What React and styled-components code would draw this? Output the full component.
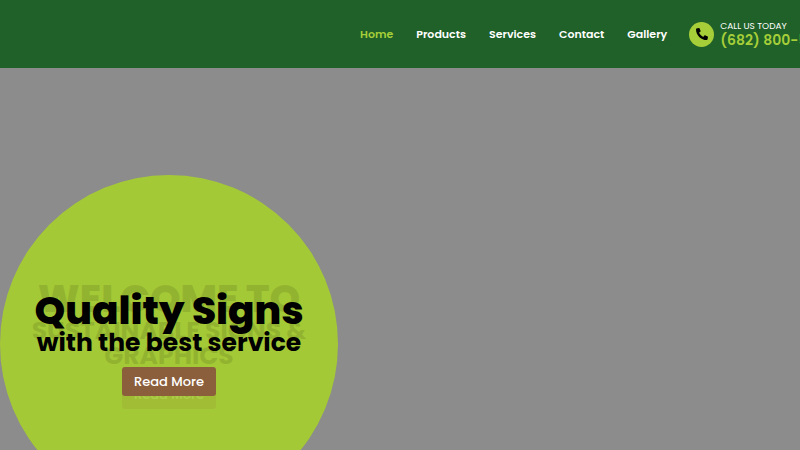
import React from "react";
import styled, { createGlobalStyle } from "styled-components";
import { FaPhoneAlt } from "react-icons/fa";

const GlobalStyle = createGlobalStyle`
  * {
    box-sizing: border-box;
  }

  body {
    margin: 0;
    font-family: Poppins, Inter, sans-serif;
    background-color: #8c8c8c;
    overflow: hidden;
  }
`;

const Page = styled.div`
  height: 100vh;
  display: flex;
  flex-direction: column;
  overflow: hidden;
`;

const Header = styled.header`
  display: flex;
  align-items: center;
  gap: 22px;
  height: 68px;
  flex-shrink: 0;
  padding-left: 45%;
  background-color: #1f6128;
  white-space: nowrap;
`;

const Nav = styled.nav`
  display: flex;
  gap: 23px;
`;

const NavLink = styled.a`
  font-size: 11px;
  line-height: 16px;
  font-weight: 600;
  text-decoration: none;
  color: ${(props) => (props.$active ? "#a6ce39" : "#fff")};
`;

const Phone = styled.a`
  display: flex;
  align-items: center;
  gap: 6px;
  color: #a6ce39;
  text-decoration: none;
`;

const PhoneIcon = styled.span`
  display: flex;
  align-items: center;
  justify-content: center;
  width: 25px;
  height: 25px;
  border-radius: 50%;
  background-color: #a6ce39;
  color: #000;
  font-size: 12px;
`;

const PhoneText = styled.span`
  display: flex;
  flex-direction: column;
`;

const PhoneLabel = styled.span`
  font-size: 9px;
  line-height: 12px;
  color: #fff;
`;

const PhoneNumber = styled.span`
  font-size: 14px;
  line-height: 16px;
  font-weight: 600;
`;

const Hero = styled.main`
  flex: 1;
  min-height: 0;
  padding-top: 107px;
  overflow: hidden;
`;

const Circle = styled.section`
  display: grid;
  align-items: start;
  width: 338px;
  height: 338px;
  padding-top: 107px;
  border-radius: 50%;
  background-color: #a4c936;
`;

/* both slides share one grid cell, the faded one is on its way out */
const Slide = styled.div`
  grid-area: 1 / 1;
  z-index: ${(props) => (props.$faded ? 0 : 1)};
  display: flex;
  flex-direction: column;
  align-items: center;
  padding-top: ${(props) => (props.$faded ? "0" : "12px")};
  opacity: ${(props) => (props.$faded ? 0.1 : 1)};
  text-align: center;
`;

const Title = styled.h1`
  margin: 0 0 2px;
  font-size: 39px;
  line-height: 34px;
  font-weight: 800;
  white-space: nowrap;
`;

const Subtitle = styled.h2`
  margin: 0 0 12px;
  font-size: 25px;
  line-height: 25px;
  font-weight: 700;
  white-space: nowrap;
`;

const Button = styled.button`
  height: 29px;
  padding: 0 12px;
  border: none;
  border-radius: 3px;
  background-color: #8b5e3c;
  color: #fff;
  font-family: inherit;
  font-size: 13px;
  line-height: 20px;
  font-weight: 500;
  cursor: pointer;
`;

const links = ["Home", "Products", "Services", "Contact", "Gallery"];

const App = () => {
  return (
    <Page>
      <GlobalStyle />
      <Header>
        <Nav>
          {links.map((link) => (
            <NavLink key={link} href="#" $active={link === "Home"}>
              {link}
            </NavLink>
          ))}
        </Nav>
        <Phone href="tel:682800">
          <PhoneIcon>
            <FaPhoneAlt />
          </PhoneIcon>
          <PhoneText>
            <PhoneLabel>CALL US TODAY</PhoneLabel>
            <PhoneNumber>(682) 800-5</PhoneNumber>
          </PhoneText>
        </Phone>
      </Header>
      <Hero>
        <Circle>
          <Slide $faded aria-hidden="true">
            <Title as="p">WELCOME TO</Title>
            <Subtitle as="p">
              SUSTAINABLE SIGNS &amp;
              <br />
              GRAPHICS
            </Subtitle>
            <Button tabIndex={-1}>Read More</Button>
          </Slide>
          <Slide>
            <Title>Quality Signs</Title>
            <Subtitle>with the best service</Subtitle>
            <Button>Read More</Button>
          </Slide>
        </Circle>
      </Hero>
    </Page>
  );
};

export default App;
